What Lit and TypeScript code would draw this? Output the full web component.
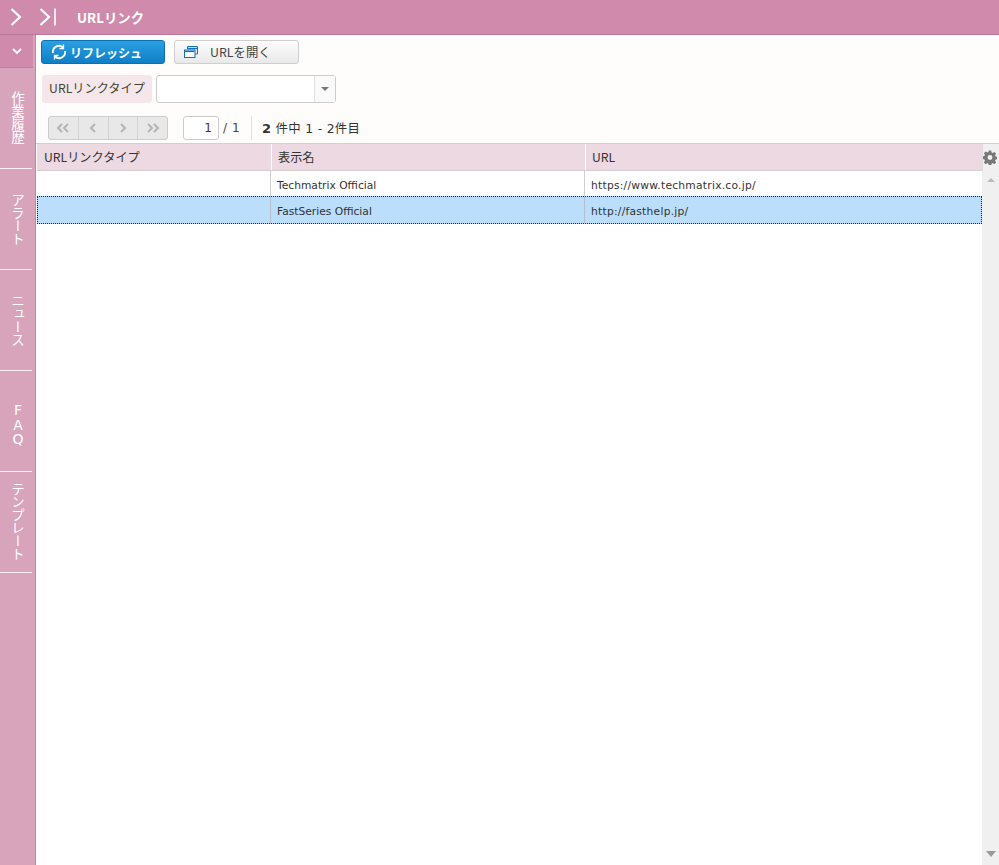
import { LitElement, html, css, svg } from "lit";
import { customElement } from "lit/decorators.js";

const chev = (d: string) => svg`<svg class="pg" width="16" height="12" viewBox="0 0 16 12" fill="none" stroke="#b4b4b4" stroke-width="2">${d.split("|").map((p) => svg`<path d=${p}/>`)}</svg>`;

@customElement("app-root")
export class AppRoot extends LitElement {
  static styles = css`
    :host { display: block; width: 999px; height: 865px; overflow: hidden; background: #fffdfc;
      font-family: "DejaVu Sans", "Noto Sans CJK JP", sans-serif; color: #333; font-size: 12px; }
    .top { height: 34px; background: #d08aab; border-bottom: 1px solid #b9799a; display: flex; align-items: center; box-sizing: content-box; }
    .top svg { display: block; flex: none; }
    .top .i1 { margin-left: 10px; }
    .top .i2 { margin-left: 17px; }
    .title { margin-left: 20px; color: #fff; font-weight: 700; font-size: 13.4px; font-family: "Noto Sans CJK JP", sans-serif; }
    .body { display: flex; height: 830px; }
    .side { width: 35px; background: #d8a4bb; border-right: 1px solid #b08fa0; flex: none; box-sizing: content-box; }
    .fold { width: 33px; height: 32px; background: #d08aab; border-bottom: 1px solid #c07c9c; display: flex; align-items: center; justify-content: center; }
    .tab { width: 32px; height: 100px; border-bottom: 1px solid #fbeff4; color: #fff; display: flex; justify-content: center; box-sizing: content-box; }
    .tab span { writing-mode: vertical-rl; text-orientation: upright; font-family: "Noto Sans CJK JP", sans-serif; font-size: 13.5px; letter-spacing: -0.5px; line-height: 14px; margin-left: 4px; }
    .tab.t1 span { padding-top: 23px; }
    .tab.t2 span { padding-top: 24px; }
    .tab.t3 span { padding-top: 24px; }
    .tab.t4 span { padding-top: 31px; letter-spacing: -1.5px; font-family: "DejaVu Sans", sans-serif; font-size: 14px; }
    .tab.t5 span { padding-top: 10px; }
    .main { flex: 1; min-width: 0; display: flex; flex-direction: column; }
    .bar { display: flex; padding: 5px 0 0 5px; gap: 9px; height: 29px; box-sizing: content-box; }
    .btn { height: 24px; box-sizing: border-box; border-radius: 3px; display: flex; align-items: center; font-family: "Noto Sans CJK JP", sans-serif; }
    .blue { width: 124px; background: linear-gradient(#2ba0e4, #0f7fc6); border: 1px solid #0c6fb0; color: #fff; font-weight: 700; font-size: 12px; padding-left: 9px; gap: 3px; }
    .gray { width: 125px; background: linear-gradient(#fdfdfd, #e9e9e9); border: 1px solid #cfcfcf; color: #444; font-size: 12.4px; padding-left: 9px; gap: 12px; }
    .filter { display: flex; gap: 4px; padding: 6px 0 0 6px; height: 28px; box-sizing: content-box; }
    .lbl { width: 110px; height: 26px; padding-bottom: 2px; background: #f4e6eb; border-radius: 3px; display: flex; align-items: center; justify-content: center; font-family: "Noto Sans CJK JP", sans-serif; font-size: 12.2px; color: #443; }
    .combo { width: 180px; height: 28px; box-sizing: border-box; border: 1px solid #ccc; border-radius: 3px; background: #fff; display: flex; justify-content: flex-end; }
    .arrow { width: 20px; border-left: 1px solid #e0e0e0; display: flex; align-items: center; justify-content: center; background: #fafafa; }
    .tri { width: 0; height: 0; border-left: 4px solid transparent; border-right: 4px solid transparent; border-top: 4px solid #777; }
    .pager { display: flex; align-items: center; padding: 13px 0 0 12px; height: 24px; box-sizing: content-box; }
    .pgs { display: flex; width: 120px; height: 24px; box-sizing: border-box; border: 1px solid #ccc; border-radius: 3px; background: #e8e8e8; }
    .pgs div { flex: 1; display: flex; align-items: center; justify-content: center; border-left: 1px solid #d2d2d2; }
    .pgs div:first-child { border-left: 0; }
    .pnum { margin-left: 15px; width: 36px; height: 24px; box-sizing: border-box; border: 1px solid #ccc; border-radius: 3px; background: #fff; text-align: right; padding-right: 6px; line-height: 22px; font-size: 12px; color: #4b2a6a; }
    .tot { margin-left: 4px; width: 28px; font-size: 12px; letter-spacing: 0.6px; color: #444; white-space: pre; }
    .sep { width: 1px; height: 24px; background: #ddd; }
    .cnt { margin-left: 10px; font-size: 12.4px; letter-spacing: 0.3px; color: #333; white-space: pre; }
    .cnt b { font-size: 13px; }
    .grid { margin-top: 3px; flex: 1; display: grid; grid-template-columns: 1fr 17px; grid-template-rows: 27px 1fr; border-top: 1px solid #d6ccd1; }
    .head { display: grid; grid-template-columns: 234px 314px 1fr; margin-left: 1px; background: #edd9e2; border-bottom: 1px solid #d5cdd1; box-sizing: border-box; font-family: "Noto Sans CJK JP", sans-serif; font-size: 12.2px; color: #333; }
    .head div { display: flex; align-items: center; padding-left: 6px; border-left: 1px solid #fff; }
    .head div:first-child { border-left: 0; padding-left: 7px; }
    .gear { background: #f0f0f0; border-left: 1px solid #ddd; display: flex; align-items: center; justify-content: center; padding-right: 2px; box-sizing: border-box; }
    .rows { background: #fff; margin-left: 1px; }
    .row { display: grid; grid-template-columns: 233px 314px 1fr; box-sizing: border-box; font-size: 10.7px; color: #333; }
    .row div { display: flex; align-items: center; padding-left: 6px; border-left: 1px solid #d0d0d0; white-space: nowrap; }
    .row div:first-child { border-left: 0; }
    .row div:last-child { letter-spacing: 0.25px; padding-left: 6px; }
    .row.r1 { height: 25px; }
    .row.r1 div:not(:first-child) { padding-top: 3px; }
    .row.sel { height: 28px; grid-template-columns: 232px 314px 1fr; background: #bbdefc; border: 1px dotted #222; }
    .row.sel div { padding-top: 2px; border-left-color: #b4c0c9; }
    .sb { background: #f0f0f0; display: flex; flex-direction: column; justify-content: space-between; align-items: center; padding: 7px 0 8px; box-sizing: border-box; }
    .up { width: 0; height: 0; border-left: 4px solid transparent; border-right: 4px solid transparent; border-bottom: 4px solid #bbb; }
    .dn { width: 0; height: 0; border-left: 5px solid transparent; border-right: 5px solid transparent; border-top: 6px solid #999; }
  `;

  render() {
    return html`
      <div class="top">
        <svg class="i1" width="12" height="20" viewBox="0 0 12 20" fill="none" stroke="#fff" stroke-width="2.2"><path d="M1.5 2 L10 10 L1.5 18"/></svg>
        <svg class="i2" width="18" height="20" viewBox="0 0 18 20" fill="none" stroke="#fff" stroke-width="2.2"><path d="M1.5 2 L10 10 L1.5 18"/><path d="M16 1.5 V18.5" stroke-width="1.6"/></svg>
        <span class="title">URLリンク</span>
      </div>
      <div class="body">
        <div class="side">
          <div class="fold"><svg width="10" height="7" viewBox="0 0 10 7" fill="none" stroke="#fff" stroke-width="1.8"><path d="M1 1 L5 5 L9 1"/></svg></div>
          <div class="tab t1"><span>作業履歴</span></div>
          <div class="tab t2"><span>アラート</span></div>
          <div class="tab t3"><span>ニュース</span></div>
          <div class="tab t4"><span>FAQ</span></div>
          <div class="tab t5"><span>テンプレート</span></div>
        </div>
        <div class="main">
          <div class="bar">
            <div class="btn blue">
              <svg width="16" height="16" viewBox="0 0 16 16" fill="none" stroke="#fff" stroke-width="1.8"><path d="M2 9 A6 6 0 0 1 12 3.5"/><path d="M14 7 A6 6 0 0 1 4 12.5"/><path d="M12.5 0.5 V4.5 H8.5" stroke-width="1.3"/><path d="M3.5 15.5 V11.5 H7.5" stroke-width="1.3"/></svg>
              <span>リフレッシュ</span>
            </div>
            <div class="btn gray">
              <svg width="14" height="12" viewBox="0 0 14 12" fill="none" stroke="#1273b8" stroke-width="1"><path d="M3.5 3 V0.5 H13.5 V8 H11"/><path d="M3.5 2.5 H13.5" stroke-width="1.4"/><rect x="0.5" y="4" width="10.5" height="7.5" fill="#fff"/><path d="M1 5.4 H10.5" stroke-width="1.4"/></svg>
              <span>URLを開く</span>
            </div>
          </div>
          <div class="filter">
            <div class="lbl">URLリンクタイプ</div>
            <div class="combo"><div class="arrow"><div class="tri"></div></div></div>
          </div>
          <div class="pager">
            <div class="pgs">
              <div>${chev("M7 2 L3 6 L7 10|M13 2 L9 6 L13 10")}</div>
              <div>${chev("M10 2 L6 6 L10 10")}</div>
              <div>${chev("M6 2 L10 6 L6 10")}</div>
              <div>${chev("M3 2 L7 6 L3 10|M9 2 L13 6 L9 10")}</div>
            </div>
            <div class="pnum">1</div>
            <div class="tot">/ 1</div>
            <div class="sep"></div>
            <div class="cnt"><b>2</b> 件中 1 - 2件目</div>
          </div>
          <div class="grid">
            <div class="head"><div>URLリンクタイプ</div><div>表示名</div><div>URL</div></div>
            <div class="gear">
              <svg width="15" height="15" viewBox="0 0 16 16"><path fill="#777" fill-rule="evenodd" d="M6.6 0h2.8l.4 2.2 1.3.6 1.9-1.2 2 2-1.2 1.9.6 1.3 2.2.4v2.8l-2.2.4-.6 1.3 1.2 1.9-2 2-1.9-1.2-1.3.6-.4 2.2H6.6l-.4-2.2-1.3-.6-1.9 1.2-2-2 1.2-1.9-.6-1.3L-.6 9.4V6.6l2.2-.4.6-1.3L1 3l2-2 1.9 1.2 1.3-.6zM8 5.2a2.8 2.8 0 1 0 0 5.6 2.8 2.8 0 0 0 0-5.6z"/></svg>
            </div>
            <div class="rows">
              <div class="row r1"><div></div><div>Techmatrix Official</div><div>https://www.techmatrix.co.jp/</div></div>
              <div class="row sel"><div></div><div>FastSeries Official</div><div>http://fasthelp.jp/</div></div>
            </div>
            <div class="sb"><div class="up"></div><div class="dn"></div></div>
          </div>
        </div>
      </div>
    `;
  }
}
